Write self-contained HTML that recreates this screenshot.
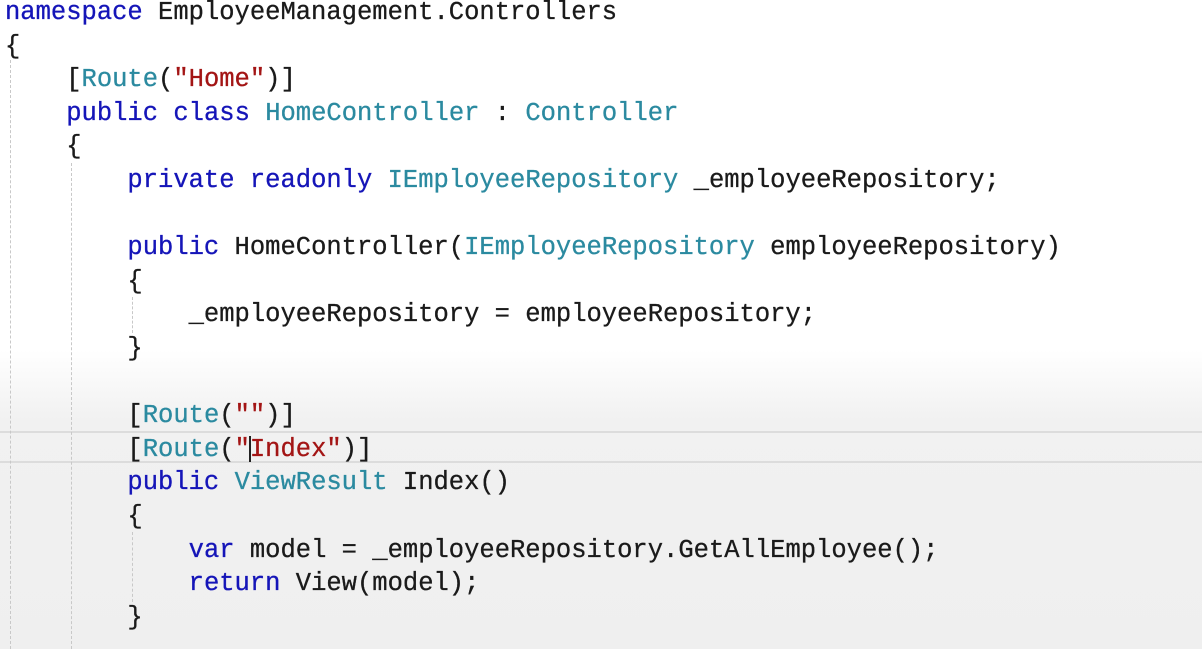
<!DOCTYPE html>
<html><head><meta charset="utf-8"><style>
html,body{margin:0;padding:0;}
body{width:1202px;height:649px;overflow:hidden;position:relative;
background:linear-gradient(to bottom,#fff 0,#fff 350px,#f1f1f1 420px,#efefef 649px);
font-family:"Liberation Mono",monospace;}
pre{margin:0;position:absolute;left:5px;top:-4px;font-family:"Liberation Mono",monospace;font-size:25.5px;letter-spacing:0;line-height:33.6px;color:#1a1a1a;-webkit-text-stroke:0.3px currentColor;}
.k{color:#1515b8}.t{color:#2b8aa0}.s{color:#a31515}
.hl{position:absolute;left:0;right:0;top:431px;height:32px;border-top:2px solid #dcdcdc;border-bottom:2px solid #dcdcdc;box-sizing:border-box;}
.g{position:absolute;width:0;border-left:1px dashed #c8c8c8;}
.cur{position:absolute;left:249px;top:436px;width:2px;height:26px;background:#222;}
</style></head><body>
<div class="hl"></div>
<div class="g" style="left:10px;top:60px;height:589px"></div>
<div class="g" style="left:71px;top:163px;height:486px"></div>
<div class="g" style="left:132px;top:297px;height:36px"></div>
<div class="g" style="left:132px;top:532px;height:70px"></div>
<pre><span class="k">namespace</span> EmployeeManagement.Controllers
{
    [<span class="t">Route</span>(<span class="s">"Home"</span>)]
    <span class="k">public</span> <span class="k">class</span> <span class="t">HomeController</span> : <span class="t">Controller</span>
    {
        <span class="k">private</span> <span class="k">readonly</span> <span class="t">IEmployeeRepository</span> _employeeRepository;

        <span class="k">public</span> HomeController(<span class="t">IEmployeeRepository</span> employeeRepository)
        {
            _employeeRepository = employeeRepository;
        }

        [<span class="t">Route</span>(<span class="s">""</span>)]
        [<span class="t">Route</span>(<span class="s">"Index"</span>)]
        <span class="k">public</span> <span class="t">ViewResult</span> Index()
        {
            <span class="k">var</span> model = _employeeRepository.GetAllEmployee();
            <span class="k">return</span> View(model);
        }</pre>
<div class="cur"></div>
</body></html>
